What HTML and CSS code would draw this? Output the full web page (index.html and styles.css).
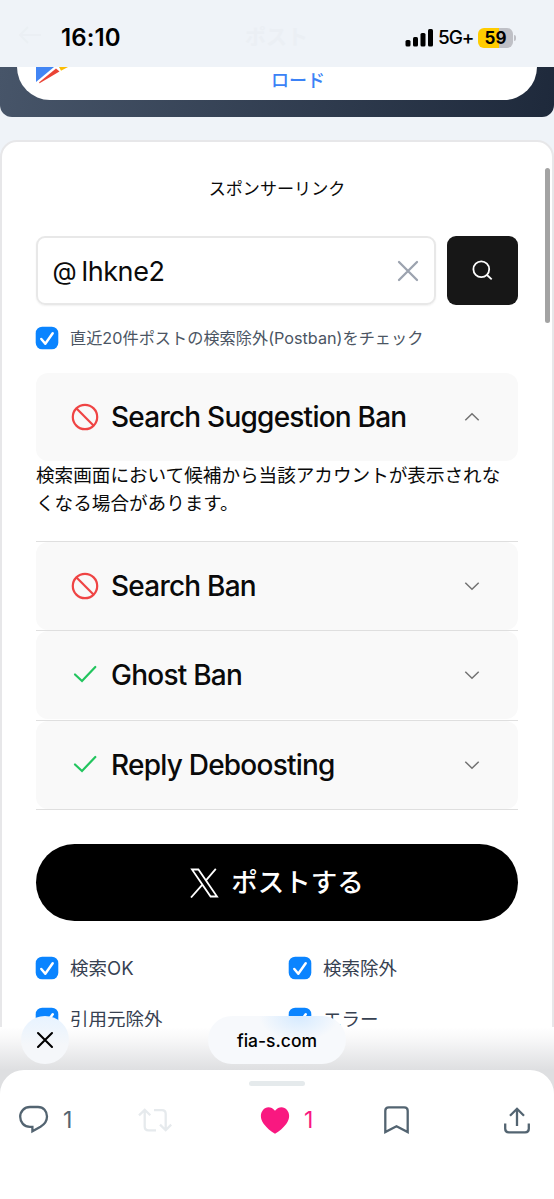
FILE: index.html
```html
<!DOCTYPE html>
<html lang="ja">
<head>
<meta charset="utf-8">
<title>fia-s.com</title>
<link rel="stylesheet" href="styles.css">
</head>
<body>
<div class="phone">
  <header class="status">
    <div class="ghost-nav">
      <svg width="24" height="20" viewBox="0 0 24 20" fill="none" stroke="currentColor" stroke-width="2"><path d="M23 10H2M10 2L2 10l8 8"/></svg>
      <span>ポスト</span>
    </div>
    <span class="time">16:10</span>
    <div class="signals">
      <svg class="bars" width="29" height="18" viewBox="0 0 29 18"><rect x="0.5" y="11" width="5" height="6.5" rx="1.5"/><rect x="8" y="8" width="5" height="9.5" rx="1.5"/><rect x="15.5" y="4" width="5" height="13.5" rx="1.5"/><rect x="23" y="0" width="5" height="17.5" rx="1.5"/></svg>
      <span class="net">5G+</span>
      <span class="battery">59</span>
      <span class="nub"></span>
    </div>
  </header>

  <main class="page">
    <section class="promo">
      <div class="download">
        <svg class="play" width="34" height="18" viewBox="0 0 34 18"><path fill="#4285f4" d="M0 0h18L0 15z"/><path fill="#ea4335" d="M20 1.5l3.5 3L4 16q-1.500.5-.5-1z"/><path fill="#fbbc04" d="M23 0h9l-7 3.700z"/></svg>
        <span class="dl-text">ロード</span>
      </div>
    </section>

    <section class="card">
      <div class="sponsor">スポンサーリンク</div>
      <div class="search">
        <div class="field">
          <span class="at">@</span><span class="name">lhkne2</span>
          <svg class="clear" width="22" height="22" viewBox="0 0 22 22" fill="none" stroke="#9ca3af" stroke-width="2.300" stroke-linecap="round"><path d="M2 2l18 18M20 2L2 20"/></svg>
        </div>
        <button class="go"><svg width="21" height="21" viewBox="0 0 21 21" fill="none" stroke="#fff" stroke-width="1.800"><circle cx="9.300" cy="9.300" r="7.900"/><path d="M15 15l4.700 4.300"/></svg></button>
      </div>
      <div class="opt first"><svg class="cb" viewBox="0 0 24 24"><rect x=".7" y=".7" width="22.600" height="22.600" rx="6.500"/><path d="M6.300 13l4 4.700L17.700 7.300"/></svg><span class="postban">直近20件ポストの検索除外(Postban)をチェック</span></div>

      <div class="acc">
        <div class="item open">
          <div class="head">
            <svg class="mark" viewBox="0 0 28 28" fill="none" stroke="#ef4444" stroke-width="2.200"><circle cx="14" cy="14" r="12.200"/><path d="M5.300 5.300l17.400 17.400"/></svg>
            <span class="title">Search Suggestion Ban</span>
            <svg class="chev" viewBox="0 0 16 10"><path d="M1.300 8.300L8 1.700l6.700 6.600"/></svg>
          </div>
          <p class="desc">検索画面において候補から当該アカウントが表示されな<br>くなる場合があります。</p>
        </div>
        <div class="item">
          <div class="head">
            <svg class="mark" viewBox="0 0 28 28" fill="none" stroke="#ef4444" stroke-width="2.200"><circle cx="14" cy="14" r="12.200"/><path d="M5.300 5.300l17.400 17.400"/></svg>
            <span class="title">Search Ban</span>
            <svg class="chev" viewBox="0 0 16 10"><path d="M1.300 1.700L8 8.300l6.700-6.600"/></svg>
          </div>
        </div>
        <div class="item">
          <div class="head">
            <svg class="mark" viewBox="0 0 28 28" fill="none" stroke="#22c55e" stroke-width="2.200"><path d="M4 13.500l7 6.500L24.300 6" stroke-linecap="round"/></svg>
            <span class="title">Ghost Ban</span>
            <svg class="chev" viewBox="0 0 16 10"><path d="M1.300 1.700L8 8.300l6.700-6.600"/></svg>
          </div>
        </div>
        <div class="item">
          <div class="head">
            <svg class="mark" viewBox="0 0 28 28" fill="none" stroke="#22c55e" stroke-width="2.200"><path d="M4 13.500l7 6.500L24.300 6" stroke-linecap="round"/></svg>
            <span class="title">Reply Deboosting</span>
            <svg class="chev" viewBox="0 0 16 10"><path d="M1.300 1.700L8 8.300l6.700-6.600"/></svg>
          </div>
        </div>
      </div>

      <button class="post">
        <svg width="29" height="30" viewBox="0 0 29 30" fill="none" stroke="#fff" stroke-width="1.800"><path d="M2 1.500h6.400L27 28.500h-6.400zM25.800.8L16 12.300M12.400 16.600L1 29.500"/></svg>
        <span>ポストする</span>
      </button>

      <div class="filters">
        <div class="opt"><svg class="cb" viewBox="0 0 24 24"><rect x=".7" y=".7" width="22.600" height="22.600" rx="6.500"/><path d="M6.300 13l4 4.700L17.700 7.300"/></svg><span>検索OK</span></div>
        <div class="opt"><svg class="cb" viewBox="0 0 24 24"><rect x=".7" y=".7" width="22.600" height="22.600" rx="6.500"/><path d="M6.300 13l4 4.700L17.700 7.300"/></svg><span>検索除外</span></div>
        <div class="opt"><svg class="cb" viewBox="0 0 24 24"><rect x=".7" y=".7" width="22.600" height="22.600" rx="6.500"/><path d="M6.300 13l4 4.700L17.700 7.300"/></svg><span>引用元除外</span></div>
        <div class="opt"><svg class="cb" viewBox="0 0 24 24"><rect x=".7" y=".7" width="22.600" height="22.600" rx="6.500"/><path d="M6.300 13l4 4.700L17.700 7.300"/></svg><span>エラー</span></div>
      </div>
    </section>
    <div class="scrollbar"></div>
  </main>

  <footer class="bottom">
    <div class="float close"><svg width="18" height="18" viewBox="0 0 18 18" fill="none" stroke="#000" stroke-width="2.100" stroke-linecap="round"><path d="M2 2l14 14M16 2L2 16"/></svg></div>
    <div class="float url"><span>fia-s.com</span></div>
    <div class="sheet">
      <div class="grip"></div>
      <div class="actions">
        <div class="act reply">
          <svg width="30" height="30" viewBox="0 0 30 30" fill="none" stroke="#536471" stroke-width="2.300"><path d="M11 2h8c5.500 0 9 4.400 9 9.600 0 4.300-2.300 7.700-6.500 10.200L13.400 26.200V21.800H11C5 21.800 1.200 17.300 1.200 11.800S5.300 2 11 2z"/></svg>
          <span>1</span>
        </div>
        <div class="act repost"><svg width="34" height="24" viewBox="0 0 34 24" fill="none" stroke="#e6eaed" stroke-width="2.300"><path d="M1 7.300l5.700-5.500 5.600 5.500M6.700 2.500v16q0 3.800 3.800 3.800H18M16 2.200h8q3.700 0 3.700 3.700V22M22 16.600l5.700 5.600 5.500-5.600"/></svg></div>
        <div class="act like">
          <svg width="30" height="27" viewBox="0 0 30 27"><path fill="#f91880" d="M15 3.800C18.700-.8 24-.6 27 3c3.200 3.900 2.700 9.300-.8 14-3 4-6.800 7.200-11.200 9.700C10.600 24.200 6.800 21 3.800 17 .3 12.300-.2 6.900 3 3 6-.6 11.300-.8 15 3.800z"/></svg>
          <span>1</span>
        </div>
        <div class="act mark-it"><svg width="25" height="28" viewBox="0 0 25 28" fill="none" stroke="#536471" stroke-width="2.300"><path d="M1.300 26V4.800q0-3.500 3.500-3.500h15.400q3.500 0 3.500 3.500V26L12.500 20.300z"/></svg></div>
        <div class="act share"><svg width="26" height="27" viewBox="0 0 26 27" fill="none" stroke="#536471" stroke-width="2.300"><path d="M13 19V2M6 8.800L13 1.800l7 7M1.200 16.500v5.200q0 3.600 3.600 3.600h16.400q3.600 0 3.600-3.600V16.500"/></svg></div>
      </div>
    </div>
  </footer>
</div>
</body>
</html>
```
FILE: styles.css
```css
* { box-sizing: border-box; }
body { margin: 0; }
button { border: 0; padding: 0; }
svg { display: block; flex: none; }
.phone {
  width: 554px; height: 1199px; overflow: hidden;
  display: flex; flex-direction: column;
  background: #fff; color: #0a0a0a;
  font-family: Inter, "Noto Sans CJK JP", sans-serif;
  white-space: nowrap;
}

/* status bar */
.status {
  position: relative; flex: none; height: 67px; padding: 4px 38px 0 61px;
  display: flex; align-items: center; justify-content: space-between;
  background: #eff3f8; color: #000;
}
.ghost-nav {
  position: absolute; inset: 2px 0 0 18px; display: flex; align-items: center;
  color: #ebeff4; font-size: 21px; font-weight: 700;
}
.ghost-nav span { margin-left: 203px; }
.time { position: relative; top: 2px; font-size: 24px; font-weight: 600; line-height: 30px; letter-spacing: 0.1px; }
.signals { position: relative; top: 2px; display: flex; align-items: center; }
.net { margin-left: 4px; width: 35px; font-size: 19px; font-weight: 500; letter-spacing: -1.1px; }
.battery {
  margin-left: 5px; width: 35px; height: 20px; border-radius: 6px;
  background: linear-gradient(90deg, #ffcc00 59%, #bfc0c6 59%);
  font-size: 17px; font-weight: 700; line-height: 20px; text-align: center;
}
.nub { width: 2px; height: 6px; margin-left: 1px; border-radius: 0 2px 2px 0; background: #bfc0c6; }

/* web page */
.page { position: relative; flex: none; height: 960px; overflow: hidden; background: #eff3f8; }
.promo {
  height: 50px; padding: 0 17px; border-radius: 0 0 12px 12px;
  background: linear-gradient(100deg, #475569, #1e293b);
}
.download { height: 33px; padding-left: 19px; border-radius: 0 0 33px 33px; background: #fff; display: flex; }
.dl-text { margin: 1px 0 0 201px; font-size: 18px; line-height: 25px; font-weight: 500; color: #3b82f6; }
.card {
  margin-top: 23px; height: 960px; padding: 34px 34px 0;
  border: 2px solid #e7e7e9; border-radius: 17px; background: #fff;
}
.sponsor { height: 26px; font-size: 17.1px; line-height: 26px; text-align: center; }
.search { margin: 34px 0 0 -0.5px; height: 69px; display: flex; gap: 11px; }
.field {
  width: 400px; padding: 1px 15px 0 15px; display: flex; align-items: center;
  border: 2px solid #e8e8e8; border-radius: 9px; box-shadow: 0 1px 2px rgba(0,0,0,.06);
}
.at { font-size: 25px; width: 29px; }
.name { font-size: 27px; letter-spacing: -0.4px; }
.clear { margin-left: auto; }
.go { flex: 1; display: grid; place-items: center; border-radius: 9px; background: #171717; }
.opt { display: flex; align-items: center; gap: 11px; height: 24px; margin-left: -1px; font-size: 18.5px; color: #374151; }
.opt.first { margin-top: 21px; }
.opt span { position: relative; top: -1px; }
.postban { font-size: 16.2px; color: #4b5563; }
.cb { width: 24px; height: 24px; fill: #0a84ff; }
.cb path { fill: none; stroke: #fff; stroke-width: 2.500; stroke-linecap: round; stroke-linejoin: round; }
.acc { margin-top: 23px; }
.item { height: 89.5px; border-bottom: 1px solid #dfdfdf; }
.item.open { height: 168.5px; }
.head {
  height: 88px; padding: 0 38px 0 35px; display: flex; align-items: center;
  border-radius: 12px; background: #f9f9f9;
  font-size: 28px; font-weight: 500;
}
.mark { width: 28px; height: 28px; margin-right: 12px; }
.title { letter-spacing: -0.77px; }
.chev { width: 16px; height: 10px; margin-left: auto; fill: none; stroke: #737373; stroke-width: 1.500; }
.desc { margin: 0; font-size: 18.6px; line-height: 28px; }
.post {
  margin-top: 34px; width: 100%; height: 77px; border-radius: 39px; background: #000; color: #fff;
  display: flex; align-items: center; justify-content: center; gap: 12px;
  font: 500 26.5px Inter, "Noto Sans CJK JP", sans-serif;
}
.post span { position: relative; top: -2px; }
.filters { margin-top: 35px; display: grid; grid-template-columns: 253px 1fr; row-gap: 27px; }
.scrollbar { position: absolute; left: 545px; top: 101px; width: 5px; height: 155px; border-radius: 3px; background: #a3a3a3; }

/* browser chrome and tweet actions */
.bottom {
  position: relative; flex: 1; padding-top: 43px;
  background: linear-gradient(#fff 0, #f7f7f8 13px, #dedfe1 43px, #dedfe1 60px, #fff 75px);
}
.float {
  position: absolute; top: -11px; height: 48px; border-radius: 24px;
  display: grid; place-items: center; background: #f7f9fc; color: #000;
}
.close { left: 21px; width: 48px; background: linear-gradient(#e7f3ff, #f5f7fa 60%); }
.url {
  left: 208px; width: 138px; font-size: 17.5px; font-weight: 500;
  background: radial-gradient(ellipse 40px 25px at 91px 0, #d5eaff, #f7f9fc);
}
.sheet { height: 129px; padding-top: 11px; border-radius: 24px 24px 0 0; background: #fff; }
.grip { width: 56px; height: 5px; margin: 0 auto; border-radius: 3px; background: #e5eaec; }
.actions { margin-top: 18px; padding: 0 23px 0 19px; height: 32px; display: flex; align-items: center; color: #536471; font-size: 23px; }
.act { display: flex; align-items: center; }
.reply { width: 119px; gap: 14px; }
.repost { width: 122px; }
.like { width: 124px; gap: 14px; color: #f91880; }
.mark-it { width: 120px; }
```
